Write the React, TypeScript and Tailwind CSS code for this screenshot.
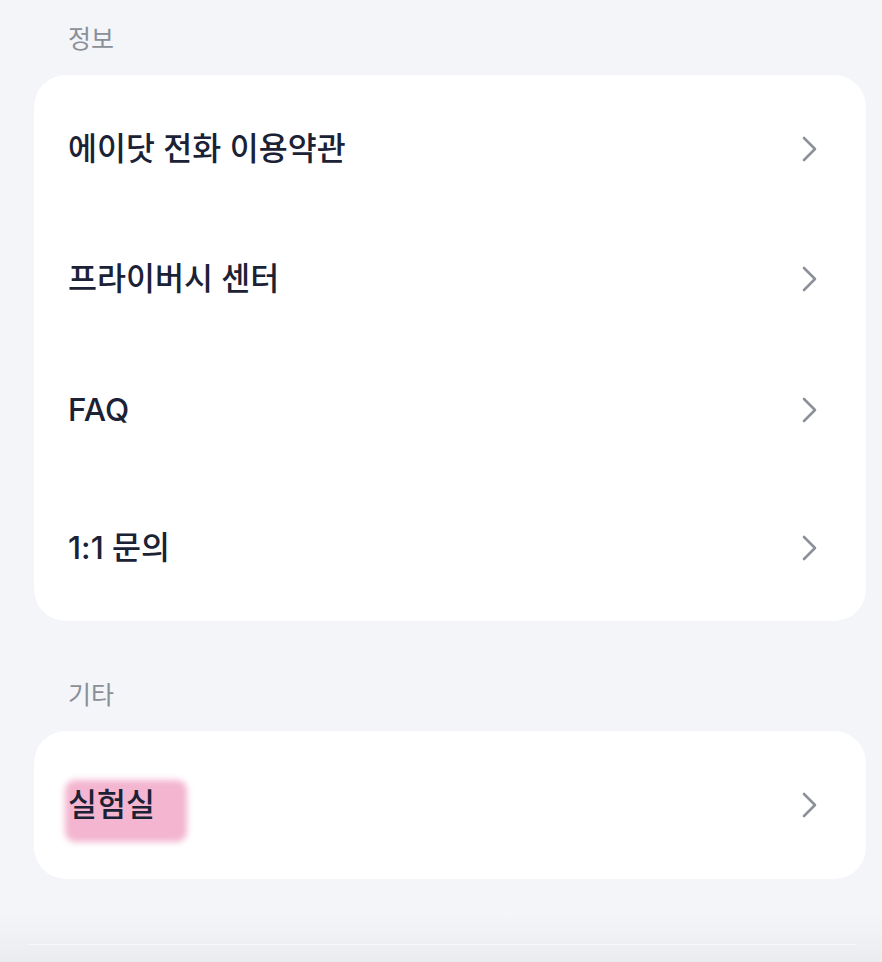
const font = { fontFamily: '"Inter", "Noto Sans CJK KR", sans-serif' }

function Row({ label, h, highlight }: { label: string; h: string; highlight?: boolean }) {
  return (
    <div className={`flex items-center justify-between pl-[34px] pr-[47px] ${h}`}>
      <span className="relative text-[31.5px] font-medium text-[#1b2235] leading-none">
        {highlight && (
          <span className="absolute -left-[3px] -right-[32px] -top-[9px] -bottom-[21px] rounded-[10px] bg-[#f3b5cf] blur-[3px]" />
        )}
        <span className="relative">{label}</span>
      </span>
      <svg width="18" height="28" viewBox="0 0 18 28" fill="none">
        <path d="M3 3 L14 14 L3 25" stroke="#8b9099" strokeWidth="2.6" strokeLinecap="round" strokeLinejoin="round" />
      </svg>
    </div>
  )
}

export default function App() {
  return (
    <div className="relative h-[962px] w-[882px] overflow-hidden bg-[#f3f5f9]" style={font}>
      <div className="pl-[34px] pr-[16px]">
        <div className="h-[75px] flex items-center pl-[34px] text-[25px] text-[#8a8f98] pt-[4px]">정보</div>
        <div className="rounded-[32px] bg-white pt-[9px]">
          <Row label="에이닷 전화 이용약관" h="h-[130px]" />
          <Row label="프라이버시 센터" h="h-[130px]" />
          <Row label="FAQ" h="h-[131px]" />
          <Row label="1:1 문의" h="h-[146px]" />
        </div>
        <div className="h-[110px] flex items-center pl-[34px] text-[25px] text-[#8a8f98] pt-[40px]">기타</div>
        <div className="rounded-[32px] bg-white">
          <Row label="실험실" h="h-[148px]" highlight />
        </div>
      </div>
      <div className="absolute bottom-0 left-0 right-0 h-[48px] bg-gradient-to-b from-[#f3f5f9] to-[#eaecf0]">
        <div className="absolute left-[28px] right-[26px] top-[30px] h-px bg-white/60" />
      </div>
    </div>
  )
}
